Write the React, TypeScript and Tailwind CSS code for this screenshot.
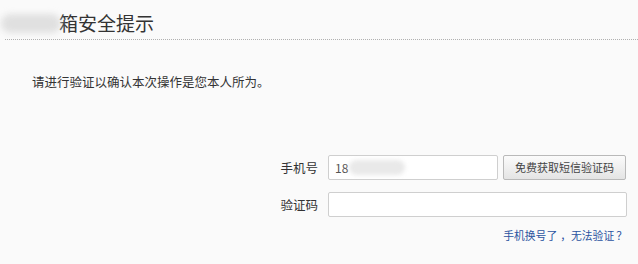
import React from "react";

export default function App() {
  return (
    <div className="w-[638px] h-[264px] overflow-hidden bg-[#fafafa] text-[#333] font-['Noto_Sans_CJK_SC','Noto_Sans',sans-serif]">
      <div className="ml-[5px] h-[40px] border-b border-dotted border-[#b0b0b0]">
        <div className="flex items-center pt-[12px] h-[34px]">
          <span className="-ml-[4px] -mr-[2px] w-[60px] h-[19px] rounded-full bg-[#e0e0e0] blur-[3px]" />
          <span className="text-[19px] leading-[22px] text-[#333]">箱安全提示</span>
        </div>
      </div>
      <p className="ml-[32px] mt-[33px] text-[12.5px] leading-[18px] text-[#333]">
        请进行验证以确认本次操作是您本人所为。
      </p>
      <div className="ml-[270px] mt-[64px] grid grid-cols-[48px_299px] gap-x-[10px] gap-y-[12px] items-center">
        <div className="text-right text-[12.5px] leading-[18px] text-[#333]">手机号</div>
        <div className="flex items-center h-[25px]">
          <div className="w-[170px] h-[25px] bg-white border border-[#cfcfcf] rounded-[2px] flex items-center pl-[6px]">
            <span className="text-[12px] text-[#555]">18</span>
            <span className="ml-[1px] w-[56px] h-[15px] rounded-full bg-[#e9e9e9] blur-[2px]" />
          </div>
          <button className="ml-[5px] w-[123px] h-[25px] rounded-[2px] border border-[#b9b9b9] bg-gradient-to-b from-[#fbfbfb] to-[#e4e4e4] text-[11px] text-[#444]">
            免费获取短信验证码
          </button>
        </div>
        <div className="text-right text-[12.5px] leading-[18px] text-[#333]">验证码</div>
        <div className="h-[25px] bg-white border border-[#cfcfcf] rounded-[2px]" />
      </div>
      <div className="ml-[328px] w-[299px] mt-[4px] text-right">
        <a className="text-[10.8px] leading-[14px] text-[#2a53a0]">
          手机换号了<span className="ml-[3px]">，</span>无法验证<span className="ml-[2px]">？</span>
        </a>
      </div>
    </div>
  );
}
